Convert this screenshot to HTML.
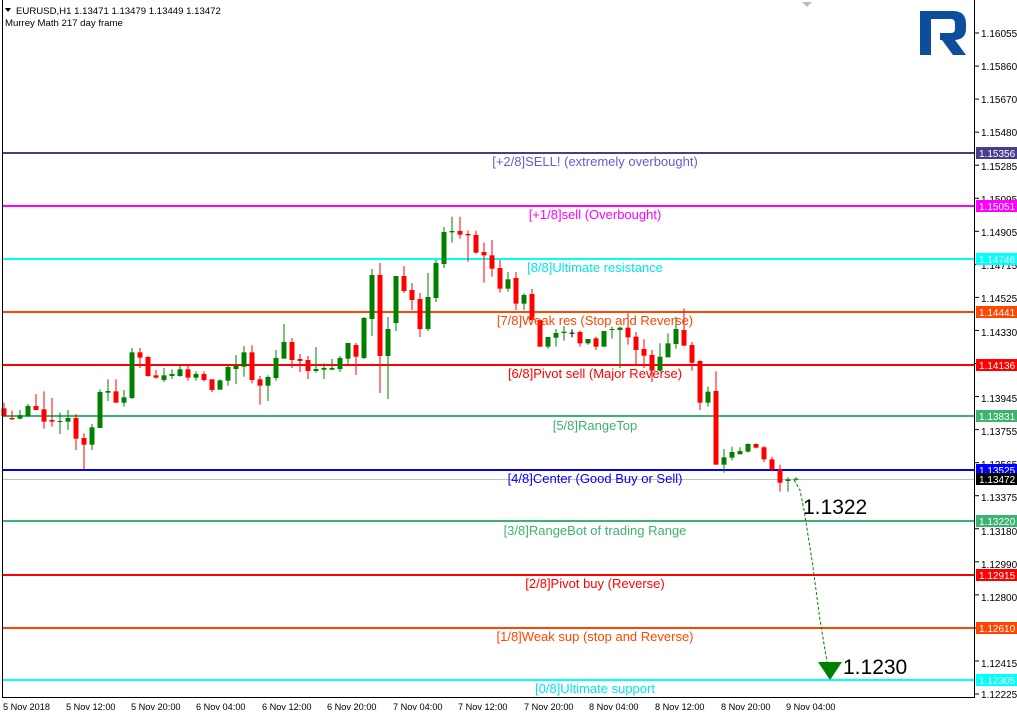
<!DOCTYPE html>
<html><head><meta charset="utf-8"><style>
body{margin:0;background:#fff;width:1017px;height:714px;overflow:hidden;font-family:"Liberation Sans",sans-serif}
svg{display:block}
</style></head><body>
<svg id="s" width="1017" height="714" xmlns="http://www.w3.org/2000/svg" font-family="Liberation Sans, sans-serif">
<rect width="1017" height="714" fill="#fff"/>
<g id="lv"></g>
<g id="cd"></g>
<line x1="2.5" y1="0" x2="2.5" y2="697" stroke="#000"/>
<line x1="974.5" y1="0" x2="974.5" y2="697" stroke="#000"/>
<line x1="2" y1="697.5" x2="975" y2="697.5" stroke="#000"/>
<polygon points="802,2 812,2 807,7" fill="#bbb"/>
<polygon points="5,8 11,8 8,12" fill="#000"/>
<text x="16" y="14" font-size="9.6">EURUSD,H1  1.13471 1.13479 1.13449 1.13472</text>
<text x="5" y="26" font-size="9.6">Murrey Math 217 day frame</text>
<g fill="#0d4e9c">
<rect x="920" y="11" width="11" height="44"/>
<path d="M920 11 H953 Q966 11 966 24 V29 Q966 39 955 40 L966 55 H953 L942 40 H940 V33 H951 Q955 33 955 29 V24 Q955 19 951 19 H920 Z"/>
</g>
<polyline points="794,480 800,490 804,510 812,560 820,620 827,662" fill="none" stroke="#008000" stroke-dasharray="3,2"/>
<polygon points="818,662 842,662 830,680" fill="#008000"/>
<text x="803" y="514" font-size="21">1.1322</text>
<text x="843" y="674" font-size="21">1.1230</text>
<g id="ax" font-size="10"></g>
<g font-size="9.2">
<text x="3" y="710">5 Nov 2018</text><text x="66" y="710">5 Nov 12:00</text><text x="131" y="710">5 Nov 20:00</text><text x="196" y="710">6 Nov 04:00</text><text x="262" y="710">6 Nov 12:00</text><text x="327" y="710">6 Nov 20:00</text><text x="393" y="710">7 Nov 04:00</text><text x="458" y="710">7 Nov 12:00</text><text x="524" y="710">7 Nov 20:00</text><text x="589" y="710">8 Nov 04:00</text><text x="655" y="710">8 Nov 12:00</text><text x="721" y="710">8 Nov 20:00</text><text x="786" y="710">9 Nov 04:00</text>
</g>
<g font-size="10" fill="#000">
<text x="981" y="37">1.16055</text><text x="981" y="70">1.15860</text><text x="981" y="103">1.15670</text><text x="981" y="136">1.15480</text><text x="981" y="170">1.15285</text><text x="981" y="203">1.15095</text><text x="981" y="236">1.14905</text><text x="981" y="269">1.14715</text><text x="981" y="302">1.14525</text><text x="981" y="336">1.14330</text><text x="981" y="369">1.14140</text><text x="981" y="402">1.13945</text><text x="981" y="435">1.13755</text><text x="981" y="468">1.13565</text><text x="981" y="501">1.13375</text><text x="981" y="535">1.13180</text><text x="981" y="568">1.12990</text><text x="981" y="601">1.12800</text><text x="981" y="634">1.12610</text><text x="981" y="667">1.12415</text><text x="981" y="698">1.12225</text>
</g>
<g id="tags" font-size="10"></g>
<g font-size="13" text-anchor="middle">
<text x="595" y="166" fill="#6a5acd">[+2/8]SELL! (extremely overbought)</text>
<text x="595" y="219" fill="#ff00ff">[+1/8]sell (Overbought)</text>
<text x="595" y="272" fill="#00e5ee">[8/8]Ultimate resistance</text>
<text x="595" y="325" fill="#ff4500">[7/8]Weak res (Stop and Reverse)</text>
<text x="595" y="378" fill="#ff0000">[6/8]Pivot sell (Major Reverse)</text>
<text x="595" y="430" fill="#3cb371">[5/8]RangeTop</text>
<text x="595" y="483" fill="#0000ff">[4/8]Center (Good Buy or Sell)</text>
<text x="595" y="535" fill="#3cb371">[3/8]RangeBot of trading Range</text>
<text x="595" y="588" fill="#ff0000">[2/8]Pivot buy (Reverse)</text>
<text x="595" y="641" fill="#ff4500">[1/8]Weak sup (stop and Reverse)</text>
<text x="595" y="693" fill="#00e5ee">[0/8]Ultimate support</text>
</g>
</svg>
<script>
var NS="http://www.w3.org/2000/svg";
function el(p,t,a){var e=document.createElementNS(NS,t);for(var k in a)e.setAttribute(k,a[k]);p.appendChild(e);return e;}
var lv=document.getElementById('lv'),tg=document.getElementById('tags'),ax=document.getElementById('ax');
var L=[[153,'#483d8b','1.15356'],[206,'#ff00ff','1.15051'],[259,'#00ffff','1.14746'],[312,'#ff4500','1.14441'],[365,'#ff0000','1.14136'],[416,'#3cb371','1.13831'],[470,'#0000ff','1.13525'],[479,'#000000','1.13472'],[521,'#3cb371','1.13220'],[575,'#ff0000','1.12915'],[628,'#ff4500','1.12610'],[680,'#00ffff','1.12305']];
L.forEach(function(l){
 if(l[2]=='1.13472') el(lv,'line',{x1:3,x2:974,y1:479.5,y2:479.5,stroke:'#c0c0c0'});
 else el(lv,'rect',{x:3,y:l[0]-1,width:971,height:2,fill:l[1]});
 el(tg,'rect',{x:976,y:l[0]-6,width:41,height:12,fill:l[1]});
 var t=el(tg,'text',{x:979,y:l[0]+4,fill:'#fff'});t.textContent=l[2];
});
for(var y=33;y<=694;y+=33.05){el(ax,'line',{x1:975,x2:979,y1:y,y2:y,stroke:'#000'});}
var A=[['r',565,588,548,590],['r',594,598,572,600],['g',586,596,570,598],['g',558,588,552,590],['r',558,570,522,570],['r',568,605,514,626],['r',600,605,534,620],['g',603,605,578,642],['g',594,605,570,630],['r',594,656,582,690],['r',654,674,640,748],['g',622,674,612,690],['g',516,624,508,624],['g',513,518,478,543],['r',514,548,478,548],['g',532,548,510,560],['g',397,534,384,537],['r',397,413,384,444],['r',411,468,408,470],['r',466,473,450,476],['g',466,480,444,486],['g',462,468,448,477],['g',448,468,436,470],['r',448,473,436,482],['g',462,473,454,482],['r',462,480,454,484],['r',478,510,478,516],['g',481,509,478,509],['g',441,482,436,497],['g',436,447,405,492],['g',397,440,378,470],['r',397,480,376,490],['r',478,497,468,554],['g',471,497,466,543],['g',414,474,390,482],['g',366,416,312,416],['r',366,420,354,444],['r',417,423,402,456],['r',420,453,408,477],['g',447,453,381,458],['g',444,449,430,477],['g',444,449,417,450],['g',414,447,408,456],['g',369,416,369,432],['r',375,410,369,465],['g',294,414,291,417],['g',165,297,147,348],['r',165,408,129,519],['g',327,408,291,537],['g',168,309,168,333],['r',168,213,138,219],['r',210,240,189,270],['r',237,327,219,351],['g',231,327,159,333],['g',129,234,120,246],['g',36,132,21,144]];
var B=[['g',63,67,20,98],['r',63,74,20,86],['r',72,76,62,155],['r',75,128,62,130],['r',126,136,98,218],['r',136,176,90,200],['r',174,236,150,248],['g',208,236,186,245],['r',204,281,186,300],['g',255,281,250,300],['r',252,330,237,340],['r',330,410,330,410],['g',381,410,381,416],['g',369,383,357,410],['g',365,369,348,392],['k',368,370,358,382],['r',366,400,362,410],['g',387,400,387,404],['r',385,410,380,420],['g',363,410,363,410],['g',357,360,350,386],['g',353,360,350,474],['r',353,382,310,404],['r',380,420,366,462],['r',417,437,388,474],['r',435,482,420,516],['g',440,482,400,484],['g',400,442,370,442],['g',357,402,320,416],['r',360,407,295,407],['r',405,458,396,482],['r',453,578,451,600],['g',545,578,530,590],['r',543,764,484,764],['g',742,764,717,788],['g',726,743,710,751],['g',723,733,712,733],['g',702,725,700,727],['r',702,713,700,715],['r',712,748,708,756],['r',748,778,740,784],['r',778,818,764,845],['g',808,813,802,845],['g',806,808,802,812]];
var cd=document.getElementById('cd'),C={g:'#008000',r:'#ff0000',k:'#000'};
function draw(c,x,off){var col=C[c[0]];var bt=off+c[1]/3,bb=off+c[2]/3,wt=off+c[3]/3,wb=off+c[4]/3;
 el(cd,'rect',{x:x-0.5,y:wt,width:1,height:Math.max(1,wb-wt),fill:col});
 el(cd,'rect',{x:x-2.5,y:bt,width:5,height:Math.max(1,bb-bt),fill:col});}
A.forEach(function(c,i){draw(c,4+8*i,220);});
B.forEach(function(c,i){draw(c,4+8*(56+i),210);});
</script>
</body></html>
